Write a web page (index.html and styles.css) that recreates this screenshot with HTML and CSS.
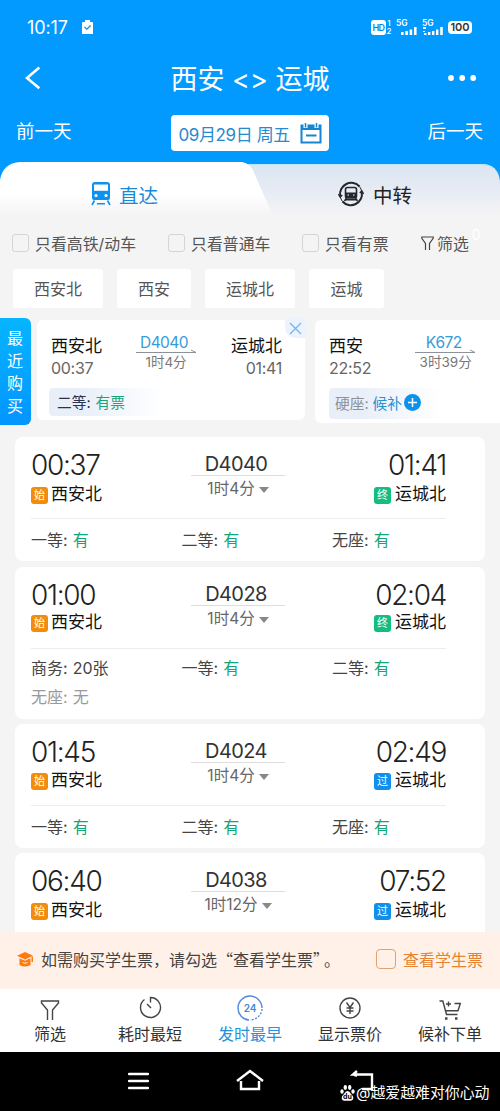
FILE: index.html
```html
<!DOCTYPE html>
<html lang="zh-CN">
<head>
<meta charset="utf-8">
<title>西安 - 运城</title>
<link rel="stylesheet" href="styles.css">
</head>
<body>
<div class="phone">
  <header class="header">
    <div class="status">
      <span class="clock">10:17</span>
      <svg class="task" width="11" height="15" viewBox="0 0 11 15"><path d="M1 2h2V0h5v2h2q1 0 1 1v11H0V3q0-1 1-1z" fill="#fff"/><path d="M2.5 7l2.3 2.2L8.7 5.5" fill="none" stroke="#0a8fe8" stroke-width="1.2"/></svg>
      <span class="hd">HD</span>
      <span class="sims"><i>1</i><i>2</i></span>
      <span class="signal"><b>5G</b><svg width="16" height="8" viewBox="0 0 16 8" fill="#fff"><path d="M0 5h2.6v3H0zM4.3 4h2.6v4H4.3zM8.6 2.5h2.6V8H8.6zM13 0h2.6v8H13z"/></svg></span>
      <span class="signal second"><b>5G</b><svg width="20" height="8" viewBox="0 0 20 8" fill="#fff"><path d="M0 0h3v2H0zM0 4h2v1H0zM1 6h2.5v2H1zM5 5h2.4v3H5zM9 4h2.4v4H9zM13 2.5h2.4V8H13zM17.2 0h2.6v8h-2.6z"/></svg></span>
      <span class="battery">100</span>
    </div>
    <div class="titlebar">
      <svg width="16" height="24" viewBox="0 0 16 24"><path d="M14.3 1.5L2 12l12.3 10.3" fill="none" stroke="#fff" stroke-width="2.6"/></svg>
      <h1>西安 &lt;&gt; 运城</h1>
      <svg width="30" height="8" viewBox="0 0 30 8" fill="#fff"><circle cx="4" cy="4" r="2.9"/><circle cx="15.2" cy="4" r="2.9"/><circle cx="26.2" cy="4" r="2.9"/></svg>
    </div>
    <div class="daterow">
      <span>前一天</span>
      <div class="date"><span>09月29日 周五</span>
        <svg width="22" height="21" viewBox="0 0 22 21" fill="none" stroke="#1686d3"><path d="M1.5 2.5h19v17h-19z" stroke-width="2"/><path d="M1 4.5h20" stroke-width="5"/><path d="M5.5 0v5M16.5 0v5" stroke="#fff" stroke-width="4"/><path d="M5.5 0v4.5M16.5 0v4.5" stroke-width="1.5"/><path d="M6 12.5h10.5" stroke-width="2"/></svg>
      </div>
      <span>后一天</span>
    </div>
  </header>

  <nav class="tabs">
    <svg class="tabshape" width="500" height="54" viewBox="0 0 500 54">
      <defs>
        <linearGradient id="tabWhite" x1="0" y1="0" x2="0" y2="1"><stop offset=".6" stop-color="#fff"/><stop offset="1" stop-color="#f4f4f4"/></linearGradient>
        <linearGradient id="tabGrey" x1="0" y1="0" x2="0" y2="1"><stop offset="0" stop-color="#dbe6f1"/><stop offset=".5" stop-color="#e6ebf4"/><stop offset="1" stop-color="#f4f4f4"/></linearGradient>
      </defs>
      <path d="M0 0h500v54H0z" fill="#029aff"/>
      <path d="M220 2h261q17 0 19 17v35H220z" fill="url(#tabGrey)"/>
      <path d="M240 2.5h241q10 0 14 5" fill="none" stroke="#b8e8ff"/>
      <path d="M0 54V18Q3 1 20 0h222q9 1 13 13l18 41z" fill="url(#tabWhite)"/>
    </svg>
    <div class="tab on">
      <svg width="20" height="24" viewBox="0 0 20 24"><path d="M4 0h12q3 0 3 3v13q0 2-2 2H3q-2 0-2-2V3q0-3 3-3z" fill="#0c92ef"/><path d="M3 2.500h14v6.300H3z" fill="#fff"/><circle cx="5" cy="13.5" r="1.6" fill="#fff"/><circle cx="15" cy="13.5" r="1.6" fill="#fff"/><path d="M3.5 18.5L1 23M16.5 18.5L19 23M6 21.7h8" stroke="#0c92ef" stroke-width="1.6"/></svg>
      <span>直达</span>
    </div>
    <div class="tab">
      <svg width="26" height="26" viewBox="0 0 26 26" fill="none" stroke="#25272c"><path d="M2.200 15A11.200 11.200 0 0 1 21.500 5.500M23.800 11A11.200 11.200 0 0 1 4.500 20.500" stroke-width="2"/><path d="M21.500 5.500a11.200 11.200 0 0 1 2.300 5.500M4.500 20.500a11.200 11.200 0 0 1-2.300-5.500" stroke-width="1"/><path d="M.5 13l1.700 3 2-2M25.500 13l-1.700-3-2 2" stroke-width="1.500"/><rect x="7.500" y="6.500" width="11" height="10.500" rx="2" stroke-width="1.600"/><path d="M8 12h10v4.500H8z" fill="#25272c"/><path d="M8.500 17L6.500 20M17.500 17l2 3M8 18.700h10" stroke-width="1.500"/><path d="M9.500 14h1.500M15 14h1.500" stroke="#fff"/></svg>
      <span>中转</span>
    </div>
  </nav>

  <div class="filters">
    <label><i class="box"></i>只看高铁/动车</label>
    <label><i class="box"></i>只看普通车</label>
    <label><i class="box"></i>只看有票</label>
    <label class="more"><svg width="13" height="15" viewBox="0 0 13 15" fill="none" stroke="#444" stroke-width="1.200"><path d="M4.500 14V7.500L.8 2.300V1h11.400v1.300L8.500 7.500V14"/></svg>筛选<sup>0</sup></label>
  </div>

  <div class="chips"><span class="w90">西安北</span><span class="w74">西安</span><span class="w90">运城北</span><span class="w75">运城</span></div>

  <section class="recent">
    <div class="label">最近购买</div>
    <article class="trip">
      <div class="close"><svg width="13" height="13" viewBox="0 0 13 13"><path d="M1 1l11 11M12 1L1 12" stroke="#6eb6ef" stroke-width="1.300"/></svg></div>
      <div class="tripmain">
        <div><b>西安北</b><em>00:37</em></div>
        <div class="mid"><a>D4040</a><svg width="61" height="5" viewBox="0 0 61 5"><path d="M0 3.500h60l-5-2.500" fill="none" stroke="#8c9299"/></svg><small>1时4分</small></div>
        <div class="end"><b>运城北</b><em>01:41</em></div>
      </div>
      <div class="seat">二等: <strong>有票</strong></div>
    </article>
    <article class="trip next">
      <div class="tripmain">
        <div><b>西安</b><em>22:52</em></div>
        <div class="mid"><a>K672</a><svg width="61" height="5" viewBox="0 0 61 5"><path d="M0 3.500h60l-5-2.500" fill="none" stroke="#8c9299"/></svg><small>3时39分</small></div>
      </div>
      <div class="seat wait">硬座: <strong>候补</strong><svg width="17" height="17" viewBox="0 0 17 17"><circle cx="8.500" cy="8.500" r="8.500" fill="#0a93ee"/><path d="M4 8.500h9M8.500 4v9" stroke="#fff" stroke-width="1.500"/></svg></div>
    </article>
  </section>

  <main class="list">
    <article class="card h124">
      <div class="route">
        <div><time>00:37</time><p><i class="tag start">始</i>西安北</p></div>
        <div class="train"><b>D4040</b><span>1时4分<i class="caret"></i></span></div>
        <div class="arrive"><time>01:41</time><p><i class="tag stop">终</i>运城北</p></div>
      </div>
      <div class="seats"><span>一等:<b>有</b></span><span>二等:<b>有</b></span><span>无座:<b>有</b></span></div>
    </article>
    <article class="card h152">
      <div class="route">
        <div><time>01:00</time><p><i class="tag start">始</i>西安北</p></div>
        <div class="train"><b>D4028</b><span>1时4分<i class="caret"></i></span></div>
        <div class="arrive"><time>02:04</time><p><i class="tag stop">终</i>运城北</p></div>
      </div>
      <div class="seats"><span>商务:<b class="count">20张</b></span><span>一等:<b>有</b></span><span>二等:<b>有</b></span><span class="none">无座:<b>无</b></span></div>
    </article>
    <article class="card h124">
      <div class="route">
        <div><time>01:45</time><p><i class="tag start">始</i>西安北</p></div>
        <div class="train"><b>D4024</b><span>1时4分<i class="caret"></i></span></div>
        <div class="arrive"><time>02:49</time><p><i class="tag pass">过</i>运城北</p></div>
      </div>
      <div class="seats"><span>一等:<b>有</b></span><span>二等:<b>有</b></span><span>无座:<b>有</b></span></div>
    </article>
    <article class="card last">
      <div class="route">
        <div><time>06:40</time><p><i class="tag start">始</i>西安北</p></div>
        <div class="train"><b>D4038</b><span>1时12分<i class="caret"></i></span></div>
        <div class="arrive"><time>07:52</time><p><i class="tag pass">过</i>运城北</p></div>
      </div>
    </article>
  </main>

  <div class="student">
    <svg width="17" height="15" viewBox="0 0 17 15" fill="#ff7a0c"><path d="M8 0l8 3.700-8 3.700L0 3.700z"/><path d="M2.500 6.200L8 8.700l5.500-2.500V13q-5.500 3-11 0zM14.500 4.500H16V10h-1.500z"/><path d="M5.500 10.500q2.500 1.500 5 0" fill="none" stroke="#fff1e8"/></svg>
    <span class="hint">如需购买学生票，请勾选<q>查看学生票</q>。</span>
    <i class="box"></i><span class="act">查看学生票</span>
  </div>

  <nav class="toolbar">
    <a><svg width="24" height="24" viewBox="0 0 24 24"><path d="M9.500 24V14L3.500 7V5h17v2l-6 7v10"/></svg>筛选</a>
    <a><svg width="24" height="24" viewBox="0 0 24 24"><path d="M6.500 3.500a10 10 0 1 0 6-2v5M9 8l4 4"/></svg>耗时最短</a>
    <a class="on"><svg width="28" height="28" viewBox="0 0 28 28"><path d="M13 26A12 12 0 1 1 26 14"/><path d="M26 15A12 12 0 0 1 14 26" stroke-dasharray="2 1.500"/><text x="14" y="18">24</text></svg>发时最早</a>
    <a><svg width="24" height="24" viewBox="0 0 24 24"><circle cx="12" cy="12" r="10"/><path d="M8.500 6.500l3.500 5 3.500-5M12 11.500V18M8.500 12h7M8.500 15h7"/></svg>显示票价</a>
    <a><svg width="24" height="24" viewBox="0 0 24 24"><path d="M1.500 5H4.800L8.500 18.500H19.500M16.500 7.500h5.800L20 14.800H7.500M10.500 5.500v5M8 8h5"/><path d="M7 22.500h2.500M17 22.500h2.500" stroke-width="2.500"/></svg>候补下单</a>
  </nav>

  <footer class="system">
    <svg width="21" height="18" viewBox="0 0 21 18"><path d="M1 2h19M1 9h19M1 16h19" stroke-linecap="round"/></svg>
    <svg width="28" height="22" viewBox="0 0 28 22"><path d="M1 12L14 2l13 10M5 12v8h18v-8"/></svg>
    <svg width="24" height="22" viewBox="0 0 24 22"><path d="M7 1L3 4.500h19V19H12M3 4.500L7 6"/></svg>
    <div class="credit"><svg width="15" height="16" viewBox="0 0 15 16" fill="#fff"><ellipse cx="2" cy="6.500" rx="1.700" ry="2.300"/><ellipse cx="5.300" cy="2.500" rx="1.700" ry="2.400"/><ellipse cx="9.700" cy="2.500" rx="1.700" ry="2.400"/><ellipse cx="13" cy="6.500" rx="1.700" ry="2.300"/><path d="M7.500 6q2 0 3.500 3 2.500 2 2.300 4-.3 3-3.300 2.700H5Q2 16 1.700 13q-.2-2 2.300-4Q5.500 6 7.500 6z"/><text x="7.500" y="14">du</text></svg>@越爱越难对你心动</div>
  </footer>
</div>
</body>
</html>
```
FILE: styles.css
```css
* { box-sizing: border-box; margin: 0; padding: 0; }
body { font-family: Inter, "Noto Sans CJK SC", sans-serif; font-size: 16px; color: #333; background: #f4f4f4; }
i, em { font-style: normal; }
b, strong, h1 { font-weight: 400; }
svg { display: block; flex: none; }
.phone { width: 500px; height: 1111px; overflow: hidden; display: flex; flex-direction: column; background: #f4f4f4; }

.header { height: 162px; flex: none; background: #029aff; color: #fff; }
.status { height: 54px; display: flex; align-items: center; padding: 0 28px 0 27px; }
.clock { font-size: 18px; letter-spacing: -.1px; width: 55px; }
.task { margin-right: auto; }
.hd { width: 15px; height: 15px; border-radius: 3px; background: #fff; color: #0785dc; font-size: 9px; font-weight: 600; line-height: 15px; text-align: center; letter-spacing: -.5px; }
.sims { display: flex; flex-direction: column; width: 6px; font-size: 8px; font-weight: 500; line-height: 8px; text-align: center; }
.signal { width: 21px; height: 16px; margin-left: 4px; display: flex; flex-direction: column; align-items: flex-end; }
.signal b { font-size: 8.500px; line-height: 8px; font-weight: 600; align-self: flex-start; }
.second { margin-left: 5px; }
.battery { margin-left: 5px; width: 24px; height: 13px; border-radius: 4px; background: #fff; color: #333; font-size: 11px; font-weight: 600; line-height: 13px; text-align: center; }
.titlebar { height: 50px; display: flex; align-items: center; justify-content: space-between; padding: 0 23px 2px 25px; }
.titlebar h1 { font-size: 27px; line-height: 40px; white-space: nowrap; padding: 4px 0 0 12px; }
.daterow { height: 58px; display: flex; align-items: center; justify-content: space-between; padding: 0 17px 0 16px; font-size: 18.500px; }
.daterow > span { padding-bottom: 6px; }
.date { width: 158px; height: 36px; border-radius: 4px; background: #fff; color: #268bcc; display: flex; align-items: center; justify-content: space-between; padding: 0 7px 0 8px; font-size: 17px; letter-spacing: -.4px; white-space: nowrap; }

.tabs { height: 54px; flex: none; position: relative; display: flex; }
.tabshape { position: absolute; left: 0; top: 0; }
.tab { position: relative; display: flex; align-items: center; gap: 9px; width: 250px; height: 64px; font-size: 19.500px; color: #222; padding-left: 88px; }
.tab.on { color: #168bdc; gap: 8px; padding-left: 91px; }

.filters { height: 53px; flex: none; display: flex; align-items: center; padding: 1px 0 0 12px; color: #555; font-size: 15.900px; }
.filters label { display: flex; align-items: center; white-space: nowrap; }
.filters label:nth-child(1) { width: 156px; }
.filters label:nth-child(2) { width: 134px; }
.filters label:nth-child(3) { width: 119px; }
.box { width: 17px; height: 18px; border: 1.500px solid #d4d4d4; border-radius: 3px; margin-right: 6px; flex: none; }
.more svg { margin-right: 3px; }
.more sup { color: #fff; font-size: 14px; margin: -18px 0 0 3px; }
.chips { height: 39px; flex: none; display: flex; gap: 14px; padding-left: 13px; }
.chips span { background: #fff; border-radius: 3px; line-height: 40px; text-align: center; color: #555; }
.w90 { width: 90px; } .w74 { width: 74px; } .w75 { width: 75px; }

.recent { height: 129px; flex: none; display: flex; padding-top: 10px; overflow: hidden; }
.label { width: 31px; height: 107px; flex: none; margin-right: 6px; padding: 9px 8px 0 7px; border-radius: 0 6px 6px 0; background: linear-gradient(#06b5ff, #0395ff); color: #fff; font-size: 16px; line-height: 22.500px; }
.trip { position: relative; width: 268px; height: 100px; flex: none; margin: 2px 10px 0 0; padding: 12px 23px 0 14px; border-radius: 6px; background: #fff; }
.next { height: 103px; width: 200px; }
.close { position: absolute; right: 0; top: -2px; width: 20px; height: 20px; border-radius: 0 5px 0 10px; background: #edf3fd; display: grid; place-items: center; }
.tripmain { display: flex; justify-content: space-between; height: 56px; }
.next .tripmain { justify-content: flex-start; gap: 51px; }
.tripmain b { display: block; font-size: 17px; line-height: 28px; color: #111; }
.tripmain em { display: block; font-size: 16px; line-height: 17px; letter-spacing: -.3px; color: #666; }
.end { text-align: right; }
.mid { width: 61px; text-align: center; }
.mid a { display: block; font-size: 15.500px; line-height: 21px; height: 17px; margin-left: -4px; letter-spacing: -.6px; color: #369bd9; white-space: nowrap; }
.mid small { display: block; font-size: 13.500px; line-height: 17px; color: #777; white-space: nowrap; }
.trip:not(.next) .mid { margin-left: -1px; }
.next .mid { margin-left: -7px; }
.seat { width: 112px; height: 28px; margin-left: -2px; padding: 0 0 2px 8px; display: flex; align-items: center; gap: 5px; font-size: 14.700px; color: #2b3349; border-radius: 4px; background: linear-gradient(90deg, #e9eff9 30%, #fff); white-space: nowrap; }
.seat strong { color: #18a57e; }
.wait { height: 31px; gap: 4px; margin-left: 0; padding-left: 6px; color: #8d9299; }
.wait strong { color: #2892d6; }
.wait svg { margin-left: -2px; }

.list { height: 495px; flex: none; overflow: hidden; display: flex; flex-direction: column; padding: 0 15px; }
.card { flex: none; background: #fff; border-radius: 8px; padding: 9px 39px 0 16px; }
.h124 { height: 124px; margin-bottom: 5.500px; }
.h152 { height: 152px; margin-bottom: 5px; }
.last { height: 110px; }
.route { display: grid; grid-template-columns: 160px 94px 1fr; height: 73px; border-bottom: 1px solid #ededed; }
.last .route { border: 0; }
.route time { display: block; font-size: 28px; font-weight: 350; line-height: 38px; letter-spacing: -1.300px; color: #222; }
.route p { display: flex; align-items: center; height: 19px; font-size: 17px; line-height: 20px; color: #111; }
.h152 .route p { height: 17px; }
.arrive { text-align: right; }
.arrive p { justify-content: flex-end; }
.tag { width: 17px; height: 17px; margin: 3px 3px 0 0; border-radius: 3px; color: #fff; font-size: 11px; line-height: 16px; text-align: center; }
.arrive .tag { margin-right: 4px; }
.start { background: #f48c0b; } .stop { background: #12bd7d; } .pass { background: #118fec; }
.train { padding-top: 9px; text-align: center; white-space: nowrap; }
.train b { display: block; height: 21px; padding-right: 4px; font-size: 20px; line-height: 19px; letter-spacing: -.6px; border-bottom: 1px solid #ddd; color: #333; }
.train span { display: flex; align-items: center; justify-content: center; gap: 4px; line-height: 25px; color: #666; font-size: 15.500px; }
.caret { border: 5px solid transparent; border-top: 6px solid #888; border-bottom: 0; margin-top: 3px; }
.seats { display: grid; grid-template-columns: 150.500px 150.500px 1fr; line-height: 29px; padding-top: 7px; color: #444; }
.h152 .seats { padding-top: 5px; }
.seats span { display: flex; gap: 5px; white-space: nowrap; }
.seats b { color: #11a67a; }
.seats .count { color: #444; }
.seats .none, .seats .none b { color: #999; }

.student { height: 57px; flex: none; display: flex; align-items: center; padding: 0 16px 3px 17px; background: #fff1e8; color: #444; white-space: nowrap; }
.hint { width: 342px; padding-left: 7px; font-family: "Noto Sans CJK SC", sans-serif; }
.hint q { margin-right: 3px; }
.hint q::before { content: "“"; } .hint q::after { content: "”"; }
.student .box { width: 20px; height: 20px; margin-right: 7px; border-color: #e4a06a; border-radius: 4px; }
.act { color: #e58330; }

.toolbar { height: 63px; flex: none; display: grid; grid-template-columns: repeat(5, 100px); background: #fff; }
.toolbar a { display: flex; flex-direction: column; align-items: center; padding-top: 7px; line-height: 24px; color: #333; }
.toolbar svg { fill: none; stroke: #444; stroke-width: 1.400; margin-bottom: 2px; }
.toolbar .on { color: #2292dd; padding-top: 5px; }
.toolbar .on svg { stroke: #5289dc; margin-bottom: 0; }
.toolbar text { fill: #4586d8; stroke: none; font-size: 10px; font-weight: 600; text-anchor: middle; }

.system { position: relative; height: 59px; flex: none; display: flex; justify-content: space-between; padding: 18px 126px 0 128px; background: #000; }
.system > svg { fill: none; stroke: #fff; stroke-width: 2.400; }
.system > svg:nth-child(1) { margin-top: 2px; }
.system > svg:nth-child(2) { margin-top: -1px; }
.credit { position: absolute; left: 340px; top: 30px; display: flex; align-items: center; gap: 1px; color: #fff; font-size: 14.900px; line-height: 22px; white-space: nowrap; }
.credit text { fill: #000; font-size: 7px; font-weight: 700; text-anchor: middle; }
```
